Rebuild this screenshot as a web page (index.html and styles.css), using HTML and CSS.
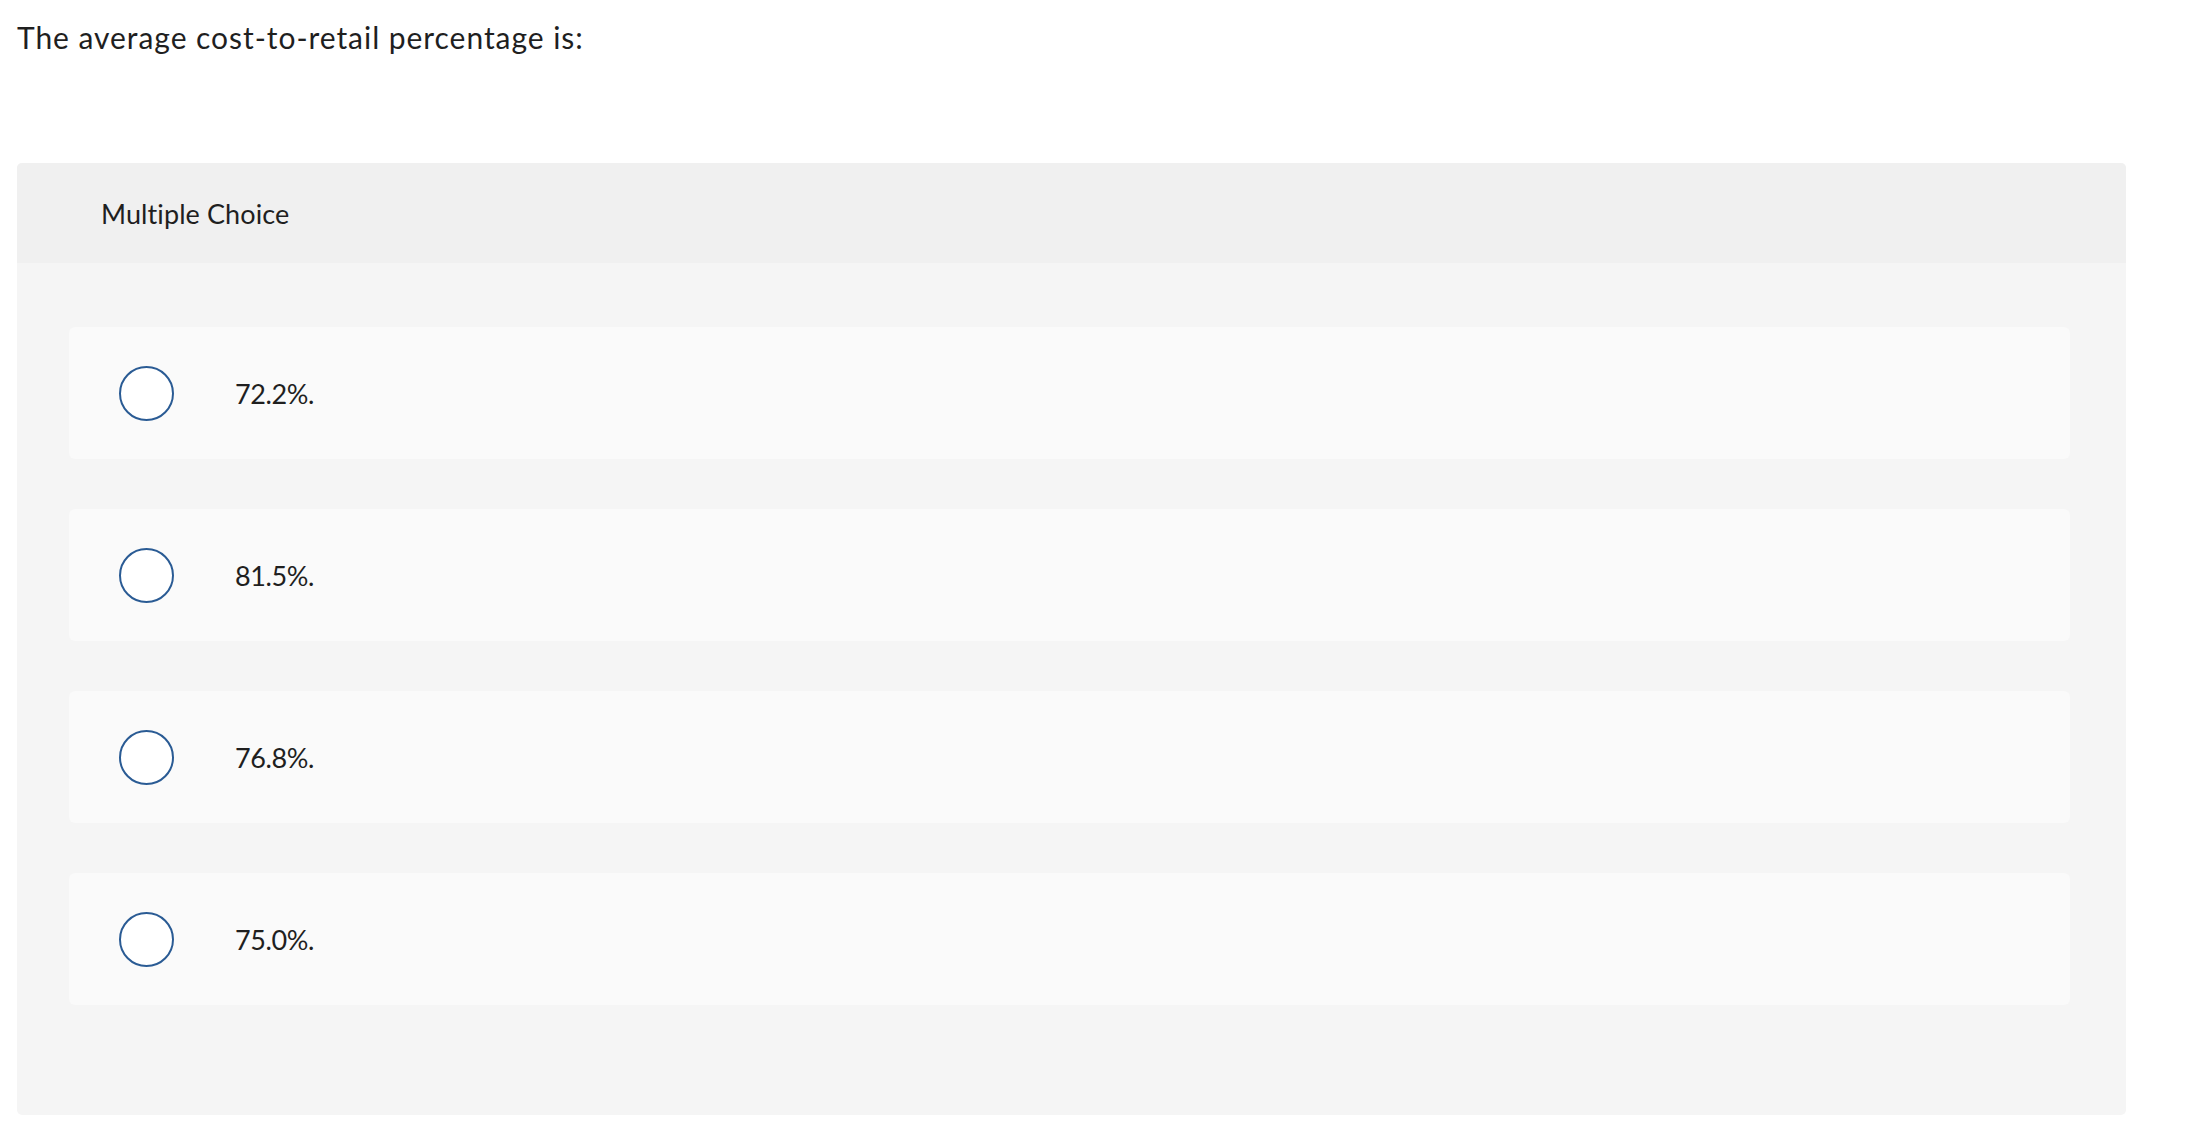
FILE: index.html
```html
<!DOCTYPE html>
<html lang="en">
<head>
<meta charset="utf-8">
<title>Multiple Choice</title>
<link rel="stylesheet" href="styles.css">
</head>
<body>
  <p class="prompt">The average cost-to-retail percentage is:</p>
  <section class="question">
    <header class="question-head">Multiple Choice</header>
    <div class="choices">
      <label class="choice"><span class="radio"></span><span class="choice-text">72.2%.</span></label>
      <label class="choice"><span class="radio"></span><span class="choice-text">81.5%.</span></label>
      <label class="choice"><span class="radio"></span><span class="choice-text">76.8%.</span></label>
      <label class="choice"><span class="radio"></span><span class="choice-text">75.0%.</span></label>
    </div>
  </section>
</body>
</html>
```
FILE: styles.css
```css
html, body {
  margin: 0;
  padding: 0;
  background: #ffffff;
}
body {
  font-family: "Lato", "Liberation Sans", sans-serif;
  color: #1f1f1f;
  padding: 0 62px 0 17px;
}
.prompt {
  margin: 0;
  padding-top: 17px;
  font-size: 30px;
  line-height: 40px;
  letter-spacing: 0.95px;
}
.question {
  margin-top: 106px;
  width: 2109px;
  background: #f5f5f5;
  border-radius: 5px;
  overflow: hidden;
}
.question-head {
  height: 100px;
  display: flex;
  align-items: center;
  padding-left: 84px;
  background: #f0f0f0;
  font-size: 27px;
  letter-spacing: 0.1px;
}
.choices {
  display: flex;
  flex-direction: column;
  gap: 50px;
  padding: 64px 56px 110px 52px;
}
.choice {
  height: 132px;
  display: flex;
  align-items: center;
  background: #fafafa;
  border-radius: 6px;
  padding-left: 50px;
}
.radio {
  width: 51px;
  height: 51px;
  border: 2px solid #2a5b94;
  border-radius: 50%;
  background: #ffffff;
  flex: none;
}
.choice-text {
  margin-left: 61px;
  font-size: 27px;
  letter-spacing: -0.4px;
}
```
